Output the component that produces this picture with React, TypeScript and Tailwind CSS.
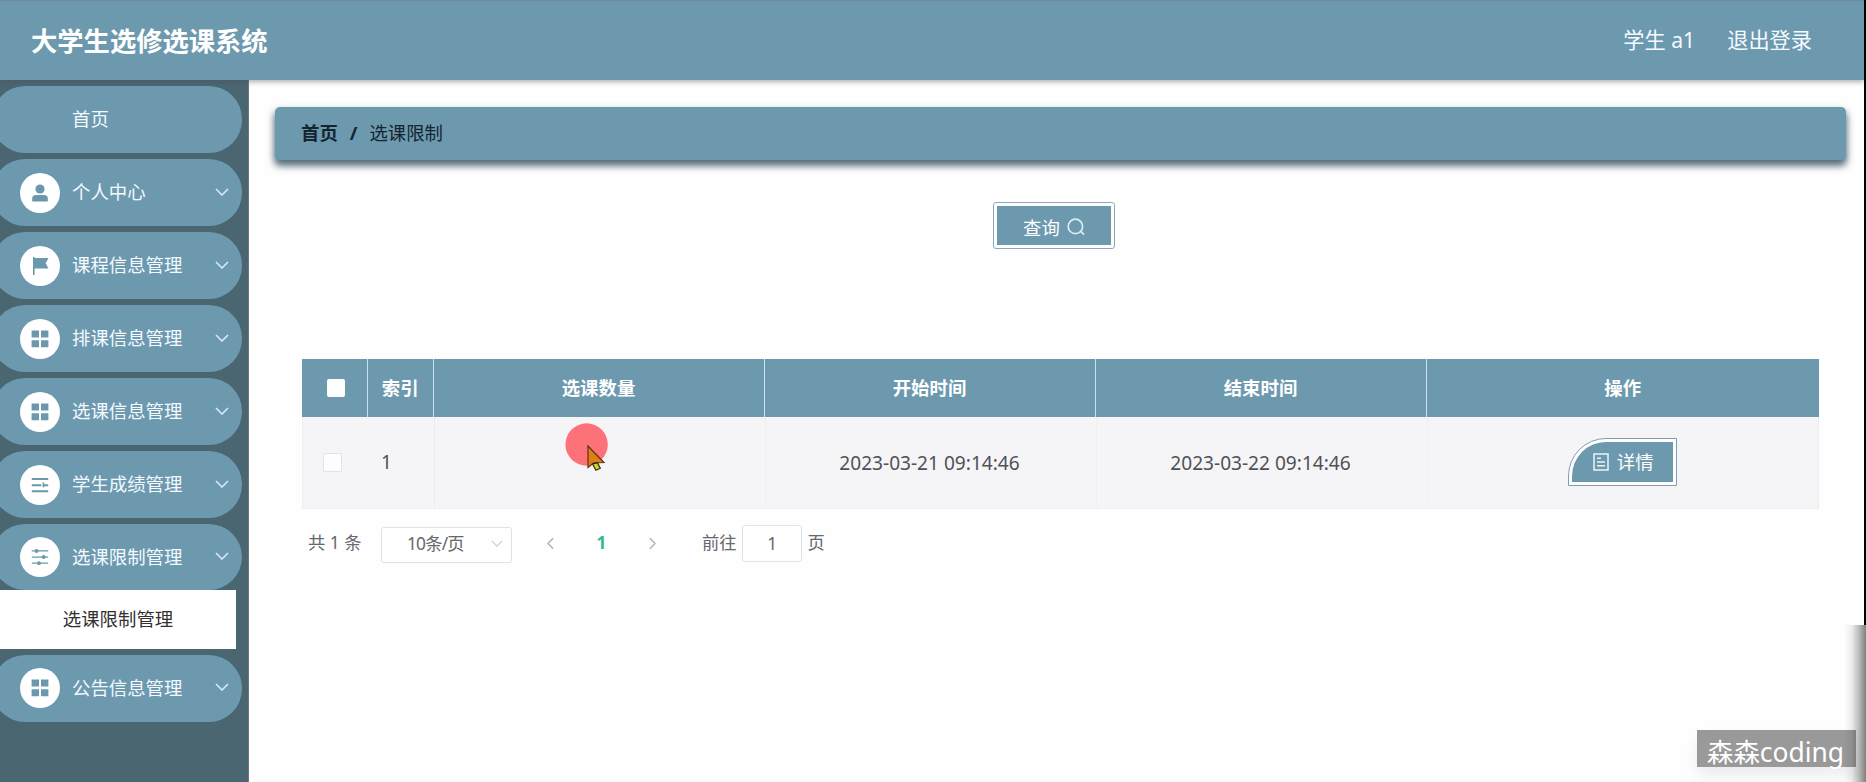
import React from 'react';

type IconName = 'none' | 'user' | 'flag' | 'grid' | 'lines' | 'sliders';

const Glyph = ({ name }: { name: IconName }) => (
  <svg className="h-[18px] w-[18px]" viewBox="0 0 18 18" fill="#6b98ad">
    {name === 'user' && (
      <>
        <circle cx="9" cy="5" r="4.6" />
        <path d="M1.2 17.6v-3q0-3.6 3.6-3.6h8.4q3.6 0 3.6 3.6v3z" />
      </>
    )}
    {name === 'flag' && <path d="M2 0h1.6v1H17.5l-2.8 5.2 2.8 5.3H3.6V18H2z" />}
    {name === 'grid' && (
      <path d="M.6.6h7.4v7H.6zM10 .6h7.4v7H10zM.6 10.2h7.4v7H.6zM10 10.2h7.4v7H10z" />
    )}
    {name === 'lines' && (
      <path d="M.8 2h16.4v2H.8zM.8 8.2h9.6v2H.8zM11.6 6.6h1.7v4.6h-1.7zM13 8.2h4.2v2H13zM.8 14.2h16.4v2H.8z" />
    )}
    {name === 'sliders' && (
      <>
        <path d="M.8 2.3h16.4v1.3H.8zM.8 8.4h16.4v1.3H.8zM.8 14.5h16.4v1.3H.8z" />
        <circle cx="5.6" cy="3" r="1.9" />
        <circle cx="12.6" cy="9" r="1.9" />
        <circle cx="8" cy="15.2" r="1.9" />
      </>
    )}
  </svg>
);

const Chevron = ({ className }: { className: string }) => (
  <svg className={className} viewBox="0 0 14 8" fill="none" stroke="currentColor" strokeWidth="1.6">
    <path d="M1 1l6 6 6-6" />
  </svg>
);

const menu: { label: string; icon: IconName; child?: string }[] = [
  { label: '首页', icon: 'none' },
  { label: '个人中心', icon: 'user' },
  { label: '课程信息管理', icon: 'flag' },
  { label: '排课信息管理', icon: 'grid' },
  { label: '选课信息管理', icon: 'grid' },
  { label: '学生成绩管理', icon: 'lines' },
  { label: '选课限制管理', icon: 'sliders', child: '选课限制管理' },
  { label: '公告信息管理', icon: 'grid' },
];

const Sidebar = () => (
  <nav className="flex w-[249px] shrink-0 flex-col overflow-hidden border-r border-[#6b7880] bg-[#4a6671] pt-[6.4px]">
    {menu.map((m) => (
      <div key={m.label} className={m.child ? 'mb-[6.5px]' : 'mb-[6.6px]'}>
        <div
          className={
            'ml-[-8px] flex w-[250px] items-center rounded-[33px] bg-[#6d99af] pr-[13px] pl-[27.5px] text-[#f4faff] ' +
            (m.child ? 'h-[65.5px]' : 'h-[66.4px]')
          }
        >
          <span
            className={
              'mr-[12.5px] flex h-10 w-10 items-center justify-center rounded-full ' +
              (m.icon === 'none' ? '' : 'bg-white')
            }
          >
            <Glyph name={m.icon} />
          </span>
          <span className="-mt-px flex-1 whitespace-nowrap text-[18.4px]">{m.label}</span>
          {m.icon !== 'none' && <Chevron className="-mt-[2px] h-[8px] w-[14px] text-[#d7e9f2]" />}
        </div>
        {m.child && (
          <div className="flex h-[59px] w-[236px] items-center justify-center bg-white pb-px text-[18.4px] text-[#33302f]">
            {m.child}
          </div>
        )}
      </div>
    ))}
  </nav>
);

const cols = 'grid grid-cols-[66px_65.5px_331px_331px_331px_1fr]';
const headers = ['索引', '选课数量', '开始时间', '结束时间', '操作'];

const Table = () => (
  <div className="mt-[110px] ml-[53px] w-[1517px]">
    <div className={cols + ' h-[58px] bg-[#6c99ae] text-[18.4px] font-bold text-white'}>
      <div className="flex items-center justify-center border-r-[1.5px] border-[#c9e2ee] pl-[2px]">
        <span className="h-[18px] w-[18px] rounded-[2px] bg-white" />
      </div>
      {headers.map((h, i) => (
        <div
          key={h}
          className={'flex items-center justify-center pb-px ' + (i < 4 ? 'border-r-[1.5px] border-[#c9e2ee]' : '')}
        >
          {h}
        </div>
      ))}
    </div>
    <div className={cols + ' h-[92px] border-b border-l border-[#efeff3] bg-[#f5f5f8] text-[19.1px] text-[#505156]'}>
      <div className="flex items-center pl-[20px]">
        <span className="h-[19px] w-[19px] rounded-[2px] border border-[#e2e3e8] bg-[#fdfdfd]" />
      </div>
      <div className="flex items-center border-r border-[#ececf1] pl-[12px]">1</div>
      <div className="border-r border-[#f0f0f4]" />
      <div className="flex items-center justify-center border-r border-[#f0f0f4] pt-px pr-[2px]">2023-03-21 09:14:46</div>
      <div className="flex items-center justify-center border-r border-[#f0f0f4] pt-px pr-[2px]">2023-03-22 09:14:46</div>
      <div className="flex items-center justify-center border-r border-[#ececf1] pb-px">
        <button className="h-[48px] w-[109px] rounded-tl-[38px] border border-[#7f9fb0] bg-white p-[3px]">
          <span className="flex h-full w-full items-center justify-center gap-[8px] rounded-tl-[34px] bg-[#6c99ae] pl-px text-[18.4px] text-white">
            <svg className="-mt-px h-[18px] w-[16px]" viewBox="0 0 16 18" fill="none" stroke="#eaf5fb" strokeWidth="1.5">
              <path d="M1 1h14v16H1zM4 5.2h4M4 9h8M4 12.8h8" />
            </svg>
            详情
          </span>
        </button>
      </div>
    </div>
  </div>
);

const Pagination = () => (
  <div className="mt-[16px] ml-[59px] flex h-[37px] items-center text-[17.3px] text-[#66676c]">
    <span className="w-[73px] whitespace-nowrap pb-px">共 1 条</span>
    <div className="mt-[2px] flex h-[36px] w-[131px] items-center justify-between rounded-[3px] border border-[#dfe1e8] bg-white pr-[8px] pb-[2px] pl-[25px]">
      <span className="tracking-[-0.8px]">10条/页</span>
      <Chevron className="h-[7px] w-[12px] text-[#d2d4da]" />
    </div>
    <Chevron className="ml-[32px] h-[7px] w-[13px] rotate-90 text-[#aeb0b8]" />
    <span className="w-[89px] pb-px text-center font-bold text-[#31ba8c]">1</span>
    <Chevron className="h-[7px] w-[13px] -rotate-90 text-[#aeb0b8]" />
    <span className="ml-[43px] pb-px">前往</span>
    <span className="mx-[5.5px] flex h-[37px] w-[60px] items-center justify-center rounded-[3px] border border-[#e0e2e8] bg-white">
      1
    </span>
    <span className="pb-px">页</span>
  </div>
);

export default function App() {
  return (
    <div className="relative flex h-[782px] w-[1866px] flex-col overflow-hidden bg-[#fefefe] font-['Noto_Sans','Noto_Sans_CJK_SC',sans-serif]">
      <header className="z-10 flex h-[80px] w-[1864px] shrink-0 items-center justify-between border-t border-[#738996] bg-[#6c99ae] pr-[52px] pl-[31px] text-white shadow-[0_2px_5px_rgba(80,80,90,0.45)]">
        <h1 className="mt-[3px] text-[26.3px] font-bold">大学生选修选课系统</h1>
        <div className="flex gap-[32px] pb-px text-[21.2px] text-[#f4faff]">
          <span>学生 a1</span>
          <span>退出登录</span>
        </div>
      </header>
      <div className="flex min-h-0 flex-1">
        <Sidebar />
        <main className="flex flex-1 flex-col">
          <div className="mt-[26.5px] ml-[26px] flex h-[53px] w-[1571px] shrink-0 items-center rounded-[5px] bg-[#6c99ae] pl-[26px] text-[18.4px] text-[#142530] shadow-[0_5px_7px_1px_rgba(45,72,90,0.8)]">
            <b>首页</b>
            <b className="mx-[12px]">/</b>
            <span>选课限制</span>
          </div>
          <button className="mt-[42.5px] ml-[744px] h-[47px] w-[122px] shrink-0 rounded-[3px] border border-[#8aaaba] bg-white p-[3px]">
            <span className="flex h-full w-full items-center justify-center gap-[7px] bg-[#6c99ae] pt-[4px] text-[18.4px] text-white">
              查询
              <svg className="-mt-px h-[18px] w-[18px]" viewBox="0 0 18 18" fill="none" stroke="#d9edf6" strokeWidth="1.7">
                <circle cx="8.4" cy="8.4" r="7.2" />
                <path d="M13.6 13.2l3.4 3.5" />
              </svg>
            </span>
          </button>
          <Table />
          <Pagination />
        </main>
      </div>
      <div className="absolute top-0 right-0 z-20 h-[625px] w-[2px] bg-black" />
      <svg className="absolute top-[423px] left-[565px] h-[50px] w-[44px]" viewBox="0 0 44 50">
        <circle cx="21.6" cy="21.5" r="21.2" fill="#fd7178" />
        <path d="M23 23v21.5l5.5-4.5 10.500-.5z" fill="#df7d18" stroke="#5b3310" strokeWidth="1.2" />
        <path d="M27.500 41l3.400 6.200 4.400-1.900-2.900-5.500z" fill="#cfd02e" stroke="#33300a" strokeWidth="1.2" />
      </svg>
      <div className="absolute top-[730px] left-[1697px] flex h-[37px] w-[159px] items-center justify-center whitespace-nowrap bg-[#999999] pt-[9px] pr-[2px] text-[26.4px] text-white shadow-[0_8px_14px_rgba(0,0,0,0.08)]">
        森森coding
      </div>
      <div className="absolute right-0 bottom-0 h-[157px] w-[22px] bg-[linear-gradient(to_right,transparent,rgba(0,0,0,0.07)_35%,rgba(0,0,0,0.28)_70%,rgba(0,0,0,0.5))]" />
    </div>
  );
}
